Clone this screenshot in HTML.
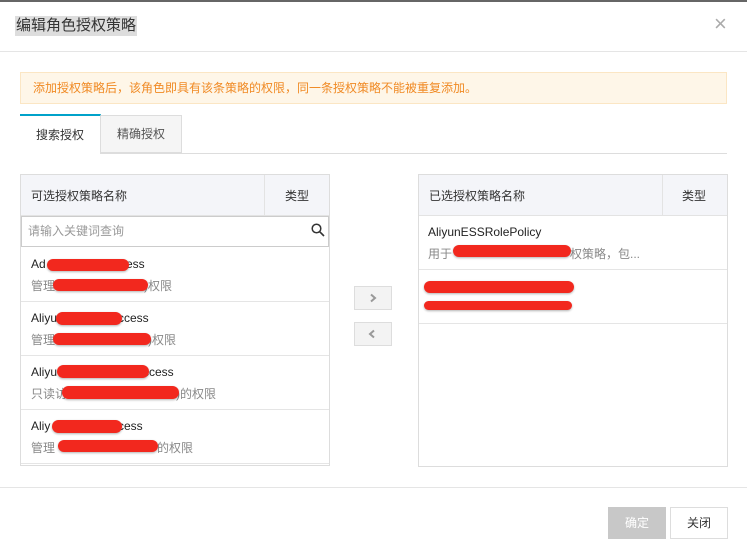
<!DOCTYPE html>
<html><head><meta charset="utf-8"><style>
*{box-sizing:border-box;margin:0;padding:0}
body{width:747px;height:557px;background:#fff;font-family:"Liberation Sans","Noto Sans CJK SC",sans-serif;font-size:12px;color:#333;position:relative;overflow:hidden}
.a{position:absolute}
.red{position:absolute;background:#f2281e;border-radius:8px;box-shadow:0 1px 2px rgba(0,0,0,.3)}
.t1{font-size:12px;color:#222}
.t2{font-size:12px;color:#888}
</style></head><body>
<div class="a" style="left:0;top:0;width:747px;height:2px;background:#666"></div>
<div class="a" style="left:15px;top:16px;font-size:15px;color:#333;background:#ddd;padding:0 1px;line-height:20px">编辑角色授权策略</div>
<div class="a" style="left:714px;top:12px;font-size:22px;color:#aaa;line-height:24px">×</div>
<div class="a" style="left:0;top:51px;width:747px;height:1px;background:#e5e5e5"></div>
<div class="a" style="left:20px;top:72px;width:707px;height:32px;background:#fef6e8;border:1px solid #fbe6c4;color:#f08a24;padding-left:12px;line-height:30px">添加授权策略后，该角色即具有该条策略的权限，同一条授权策略不能被重复添加。</div>
<div class="a" style="left:20px;top:153px;width:707px;height:1px;background:#ddd"></div>
<div class="a" style="left:20px;top:114px;width:81px;height:40px;background:#fff;border-top:2px solid #00a2ca;border-right:1px solid #ddd;text-align:center;line-height:38px">搜索授权</div>
<div class="a" style="left:101px;top:115px;width:81px;height:38px;background:#f5f5f5;border:1px solid #ddd;border-left:none;text-align:center;line-height:36px;color:#555">精确授权</div>
<div class="a" style="left:20px;top:174px;width:310px;height:292px;border:1px solid #ddd;background:#fff"></div>
<div class="a" style="left:21px;top:175px;width:308px;height:41px;background:#f4f5f9;border-bottom:1px solid #e3e3e3"></div>
<div class="a" style="left:31px;top:187px">可选授权策略名称</div>
<div class="a" style="left:264px;top:175px;width:1px;height:41px;background:#e3e3e3"></div>
<div class="a" style="left:285px;top:187px">类型</div>
<div class="a" style="left:21px;top:216px;width:308px;height:31px;border:1px solid #ccc;color:#999;padding-left:6px;line-height:29px">请输入关键词查询</div>
<svg class="a" style="left:311px;top:223px" width="14" height="14"><circle cx="5.5" cy="5.5" r="4.3" fill="none" stroke="#333" stroke-width="1.5"/><path d="M8.8 8.8L13 13" stroke="#333" stroke-width="1.6"/></svg>
<div class="a" style="left:21px;top:301px;width:308px;height:1px;background:#e5e5e5"></div>
<div class="a" style="left:21px;top:355px;width:308px;height:1px;background:#e5e5e5"></div>
<div class="a" style="left:21px;top:409px;width:308px;height:1px;background:#e5e5e5"></div>
<div class="a" style="left:21px;top:463px;width:308px;height:1px;background:#e5e5e5"></div>
<div class="a t1" style="left:31px;top:257px">Ad</div><div class="a t1" style="left:126px;top:257px">ess</div>
<div class="red" style="left:47px;top:259px;width:82px;height:12px"></div>
<div class="a t2" style="left:31px;top:277px">管理</div><div class="a t2" style="left:144px;top:277px">)权限</div>
<div class="red" style="left:53px;top:279px;width:95px;height:12px"></div>
<div class="a t1" style="left:31px;top:311px">Aliyu</div><div class="a t1" style="left:118px;top:311px">ccess</div>
<div class="red" style="left:56px;top:312px;width:66px;height:13px"></div>
<div class="a t2" style="left:31px;top:331px">管理</div><div class="a t2" style="left:148px;top:331px">)权限</div>
<div class="red" style="left:53px;top:333px;width:98px;height:12px"></div>
<div class="a t1" style="left:31px;top:365px">Aliyu</div><div class="a t1" style="left:143px;top:365px">ccess</div>
<div class="red" style="left:57px;top:365px;width:92px;height:13px"></div>
<div class="a t2" style="left:31px;top:385px">只读访</div><div class="a t2" style="left:176px;top:385px">)的权限</div>
<div class="red" style="left:62px;top:386px;width:117px;height:13px"></div>
<div class="a t1" style="left:31px;top:419px">Aliy</div><div class="a t1" style="left:118px;top:419px">cess</div>
<div class="red" style="left:52px;top:420px;width:70px;height:13px"></div>
<div class="a t2" style="left:31px;top:439px">管理</div><div class="a t2" style="left:157px;top:439px">的权限</div>
<div class="red" style="left:58px;top:440px;width:100px;height:12px"></div>
<div class="a" style="left:354px;top:286px;width:38px;height:24px;background:#f3f3f3;border:1px solid #ddd"></div>
<svg class="a" style="left:368px;top:293px" width="10" height="10"><path d="M3 1.5L7 5L3 8.5" fill="none" stroke="#999" stroke-width="2"/></svg>
<div class="a" style="left:354px;top:322px;width:38px;height:24px;background:#f3f3f3;border:1px solid #ddd"></div>
<svg class="a" style="left:367px;top:329px" width="10" height="10"><path d="M7 1.5L3 5L7 8.5" fill="none" stroke="#999" stroke-width="2"/></svg>
<div class="a" style="left:418px;top:174px;width:310px;height:293px;border:1px solid #ddd;background:#fff"></div>
<div class="a" style="left:419px;top:175px;width:308px;height:41px;background:#f4f5f9;border-bottom:1px solid #e3e3e3"></div>
<div class="a" style="left:429px;top:187px">已选授权策略名称</div>
<div class="a" style="left:662px;top:175px;width:1px;height:41px;background:#e3e3e3"></div>
<div class="a" style="left:682px;top:187px">类型</div>
<div class="a t1" style="left:428px;top:225px">AliyunESSRolePolicy</div>
<div class="a t2" style="left:428px;top:245px">用于</div><div class="a t2" style="left:570px;top:245px">权策略，包...</div>
<div class="red" style="left:453px;top:245px;width:118px;height:12px"></div>
<div class="a" style="left:419px;top:269px;width:308px;height:1px;background:#e5e5e5"></div>
<div class="red" style="left:424px;top:281px;width:150px;height:12px"></div>
<div class="red" style="left:424px;top:301px;width:148px;height:9px"></div>
<div class="a" style="left:419px;top:323px;width:308px;height:1px;background:#e5e5e5"></div>
<div class="a" style="left:0;top:487px;width:747px;height:1px;background:#e5e5e5"></div>
<div class="a" style="left:608px;top:507px;width:58px;height:32px;background:#c8c8c8;color:#fff;text-align:center;line-height:32px">确定</div>
<div class="a" style="left:670px;top:507px;width:58px;height:32px;background:#fff;border:1px solid #ddd;text-align:center;line-height:30px">关闭</div>
</body></html>
